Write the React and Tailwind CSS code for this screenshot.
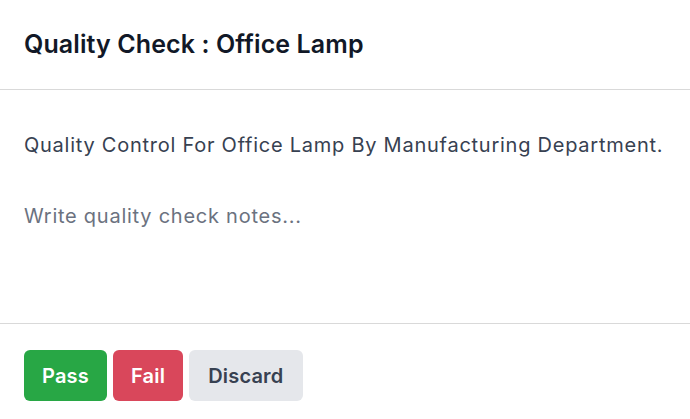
import React from "react";

export default function App() {
  return (
    <div className="w-[690px] h-[419px] bg-white overflow-hidden" style={{ fontFamily: "Inter, 'Noto Sans', sans-serif" }}>
      <div className="h-[90px] px-6 flex items-center border-b border-[#d9d9d9]">
        <h1 className="text-[25px] font-semibold text-[#111827] tracking-[0.1px]">Quality Check : Office Lamp</h1>
      </div>
      <div className="h-[234px] px-6 pt-[40px] border-b border-[#d9d9d9] flex flex-col">
        <p className="text-[20px] leading-[30px] tracking-[0.75px] text-[#374151]">Quality Control For Office Lamp By Manufacturing Department.</p>
        <textarea
          className="mt-[41px] flex-1 resize-none outline-none border-0 p-0 text-[20px] leading-[30px] tracking-[0.75px] text-[#374151] placeholder:text-[#6b7280] bg-transparent"
          placeholder="Write quality check notes..."
        />
      </div>
      <div className="px-6 pt-[26px] flex gap-[6px]">
        <button className="h-[51px] px-[18px] rounded-md bg-[#28a745] text-white text-[20px] font-semibold tracking-[0.2px]">Pass</button>
        <button className="h-[51px] px-[18px] rounded-md bg-[#d9475b] text-white text-[20px] font-semibold tracking-[0.2px]">Fail</button>
        <button className="h-[51px] px-[19px] rounded-md bg-[#e5e7eb] text-[#374151] text-[20px] font-semibold tracking-[0.2px]">Discard</button>
      </div>
    </div>
  );
}
